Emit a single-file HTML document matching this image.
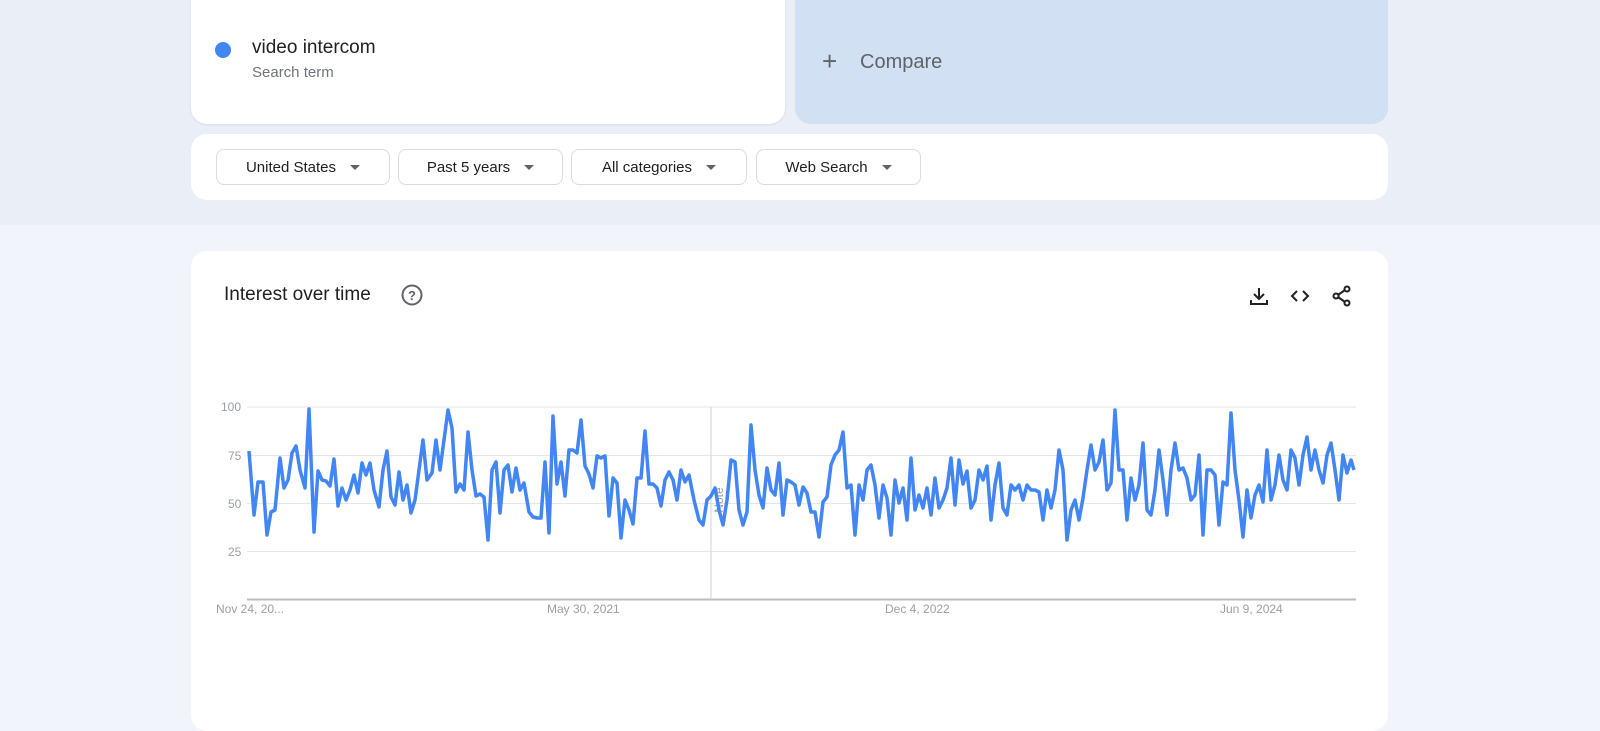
<!DOCTYPE html>
<html><head><meta charset="utf-8"><style>
*{margin:0;padding:0;box-sizing:border-box}
body{width:1600px;height:695px;overflow:hidden;background:#f1f4fa;font-family:"Liberation Sans",Arial,sans-serif;position:relative}
.top{position:absolute;left:0;top:0;width:1600px;height:225px;background:#e9eef7}
.card{position:absolute;background:#fff;border-radius:16px}
.pill{position:absolute;top:149px;height:36px;border:1px solid #dadce0;border-radius:8px;background:#fff;font-size:15px;color:#202124;display:flex;align-items:center;justify-content:center;gap:0}
.pill .c{display:inline-block;width:0;height:0;border-left:5px solid transparent;border-right:5px solid transparent;border-top:5px solid #5f6368;margin-left:14px}
.ax{position:absolute;font-size:12px;color:#9aa0a6}
</style></head><body>
<div class="top"></div>
<div class="card" style="left:191px;top:-20px;width:594px;height:144px;box-shadow:0 1px 2px rgba(0,0,0,.08)"></div>
<div style="position:absolute;left:215px;top:42px;width:16px;height:16px;border-radius:50%;background:#4285f4"></div>
<div style="position:absolute;left:252px;top:37px;font-size:19px;color:#202124">video intercom</div>
<div style="position:absolute;left:252px;top:64px;font-size:15px;color:#70757a">Search term</div>
<div style="position:absolute;left:795px;top:-20px;width:593px;height:144px;border-radius:16px;background:#d2e0f3"></div>
<div style="position:absolute;left:822px;top:46px;font-size:26px;color:#5f6368;font-weight:300">+</div>
<div style="position:absolute;left:860px;top:51px;font-size:20px;color:#5f6368">Compare</div>
<div class="card" style="left:191px;top:134px;width:1197px;height:66px"></div>
<div class="pill" style="left:216px;width:174px">United States<span class="c"></span></div>
<div class="pill" style="left:398px;width:165px">Past 5 years<span class="c"></span></div>
<div class="pill" style="left:571px;width:176px">All categories<span class="c"></span></div>
<div class="pill" style="left:756px;width:165px">Web Search<span class="c"></span></div>
<div class="card" style="left:191px;top:251px;width:1197px;height:480px"></div>
<div style="position:absolute;left:224px;top:284px;font-size:19px;color:#202124">Interest over time</div>
<svg style="position:absolute;left:400px;top:283px" width="24" height="24" viewBox="0 0 24 24"><circle cx="12" cy="12" r="9.5" fill="none" stroke="#5f6368" stroke-width="2"/><text x="12" y="17" font-size="13" font-family="Liberation Sans" text-anchor="middle" fill="#5f6368" font-weight="bold">?</text></svg>
<svg style="position:absolute;left:1248px;top:285px" width="22" height="22" viewBox="0 0 22 22" fill="none" stroke="#202124" stroke-width="2"><path d="M11 3v11M6 9l5 5 5-5M3 15v4h16v-4"/></svg>
<svg style="position:absolute;left:1289px;top:285px" width="22" height="22" viewBox="0 0 22 22" fill="none" stroke="#202124" stroke-width="2"><path d="M8 6l-5 5 5 5M14 6l5 5-5 5"/></svg>
<svg style="position:absolute;left:1331px;top:284px" width="22" height="24" viewBox="0 0 22 24" fill="none" stroke="#202124" stroke-width="2"><circle cx="16" cy="5" r="2.5"/><circle cx="5" cy="12" r="2.5"/><circle cx="16" cy="19" r="2.5"/><path d="M7 11l7-5M7 13l7 5"/></svg>
<svg style="position:absolute;left:0;top:0" width="1600" height="695">
<g stroke="#e4e6e8" stroke-width="1"><line x1="247" y1="407" x2="1356" y2="407"/><line x1="247" y1="455.5" x2="1356" y2="455.5"/><line x1="247" y1="503.5" x2="1356" y2="503.5"/><line x1="247" y1="551.5" x2="1356" y2="551.5"/></g>
<line x1="247" y1="599.5" x2="1356" y2="599.5" stroke="#bdbdbd" stroke-width="2"/>
<line x1="711" y1="407" x2="711" y2="599" stroke="#d0d0d0" stroke-width="1"/>
<text x="727" y="504" font-size="12" fill="#9aa0a6" font-family="Liberation Sans" transform="rotate(-90 723 504)" text-anchor="middle">Note</text>
<polyline fill="none" stroke="#4285f4" stroke-width="3.5" stroke-linejoin="round" points="249,451 254,515 258,482 263,482 267,535 271,512 275,510 280,458 284,488 288,480 292,453 296,446 300,470 305,488 309,409 314,532 318,471 322,480 326,481 330,486 334,459 338,506 342,488 346,500 350,490 354,475 358,493 362,463 366,475 370,463 374,490 379,507 383,470 387,451 391,497 395,505 399,472 403,500 407,485 411,513 415,500 419,470 423,440 427,480 432,473 436,440 440,470 444,440 448,410 452,428 456,492 460,484 464,490 468,432 472,470 476,496 480,494 484,497 488,540 492,470 496,462 500,513 504,470 508,465 512,492 516,468 520,490 524,483 529,512 533,517 537,518 541,518 545,462 549,533 553,416 557,484 561,462 565,496 569,450 573,450 577,453 581,420 585,466 589,474 593,488 597,456 601,458 605,456 609,516 613,478 617,483 621,538 625,500 629,510 633,524 637,478 641,478 645,431 649,484 653,484 657,488 661,506 665,480 669,472 673,480 677,500 681,470 685,482 689,475 694,500 699,520 703,525 707,500 711,496 715,488 719,510 723,525 727,500 731,460 735,462 739,510 743,525 747,512 751,425 755,470 759,495 763,508 767,468 771,490 775,495 779,463 783,515 787,480 791,482 795,485 799,505 803,487 807,493 811,512 815,512 819,537 823,502 827,497 831,465 835,455 839,450 843,432 847,488 851,485 855,535 859,485 863,500 867,470 871,465 875,485 879,518 883,485 887,498 891,535 895,480 899,503 903,488 907,520 911,458 915,510 919,495 923,508 927,488 931,515 935,478 939,508 943,500 947,488 951,458 955,505 959,460 963,484 967,471 971,508 975,500 979,470 983,480 987,466 991,520 995,485 999,463 1003,508 1007,515 1011,485 1015,490 1019,485 1023,500 1027,485 1031,490 1035,490 1039,492 1043,520 1047,490 1051,508 1055,490 1059,450 1063,470 1067,540 1071,510 1075,500 1079,520 1083,498 1087,470 1091,445 1095,470 1099,462 1103,440 1107,490 1111,483 1115,410 1119,470 1123,470 1127,520 1131,478 1135,500 1139,485 1143,443 1147,510 1151,515 1155,490 1159,450 1163,480 1167,515 1171,470 1175,443 1179,470 1183,468 1187,478 1191,500 1195,495 1199,455 1203,535 1207,470 1211,470 1215,475 1219,525 1223,482 1227,485 1231,413 1235,470 1239,500 1243,537 1247,490 1251,518 1255,495 1259,485 1263,502 1267,450 1271,500 1275,485 1279,455 1283,480 1287,490 1291,450 1295,458 1299,485 1303,455 1307,437 1311,470 1315,450 1319,470 1323,483 1327,455 1331,443 1335,470 1339,500 1343,455 1347,473 1351,460 1354,470"/>
</svg>
<div class="ax" style="left:221px;top:400px">100</div>
<div class="ax" style="left:228px;top:449px">75</div>
<div class="ax" style="left:228px;top:497px">50</div>
<div class="ax" style="left:228px;top:545px">25</div>
<div class="ax" style="left:216px;top:602px">Nov 24, 20...</div>
<div class="ax" style="left:547px;top:602px">May 30, 2021</div>
<div class="ax" style="left:885px;top:602px">Dec 4, 2022</div>
<div class="ax" style="left:1220px;top:602px">Jun 9, 2024</div>
</body></html>
